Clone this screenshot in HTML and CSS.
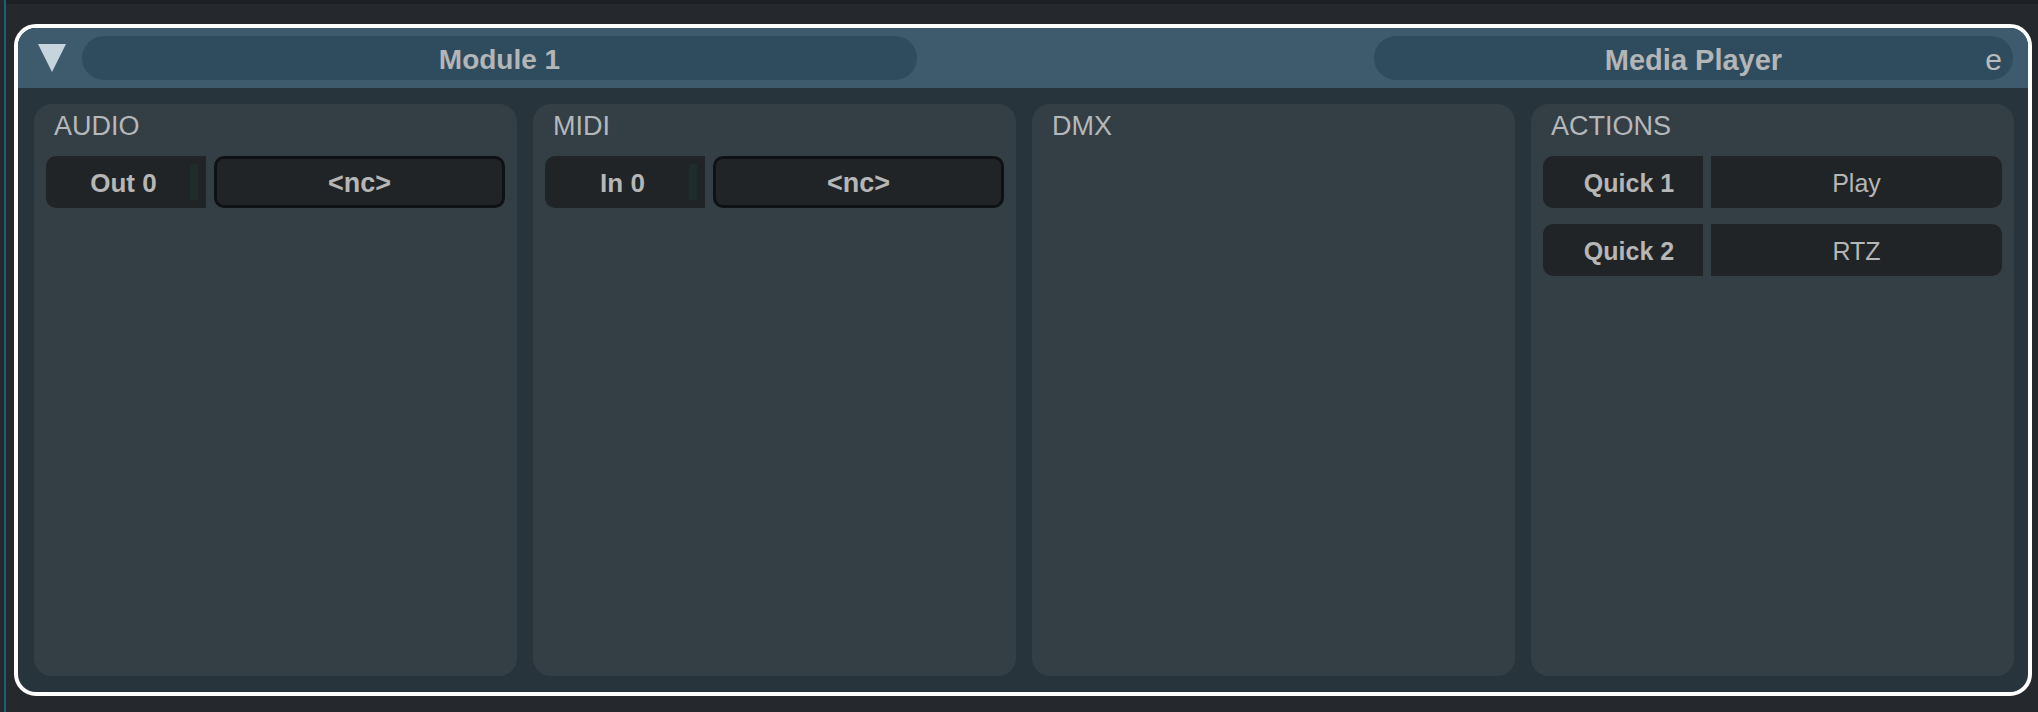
FILE: index.html
```html
<!DOCTYPE html>
<html lang="en">
<head>
    <meta charset="UTF-8">
    <title>Module 1</title>
    <link rel="stylesheet" href="styles.css">
</head>
<body>
    <div class="rail"></div>
    <div class="main">
        <div class="strip"></div>
        <div class="module">
            <div class="header">
                <svg class="collapse" width="28" height="28" viewBox="0 0 28 28">
                    <polygon points="0,0 28,0 14,28" fill="#c6d4de"/>
                </svg>
                <div class="pill name">Module 1</div>
                <div class="pill type">Media Player<span class="edit">e</span></div>
            </div>
            <div class="content">
                <div class="panel">
                    <div class="title">AUDIO</div>
                    <div class="row">
                        <div class="port">Out 0<span class="meter"></span></div>
                        <div class="route">&lt;nc&gt;</div>
                    </div>
                </div>
                <div class="panel">
                    <div class="title">MIDI</div>
                    <div class="row">
                        <div class="port">In 0<span class="meter"></span></div>
                        <div class="route">&lt;nc&gt;</div>
                    </div>
                </div>
                <div class="panel">
                    <div class="title">DMX</div>
                </div>
                <div class="panel">
                    <div class="title">ACTIONS</div>
                    <div class="row">
                        <div class="action-key">Quick 1</div>
                        <div class="action-val">Play</div>
                    </div>
                    <div class="row">
                        <div class="action-key">Quick 2</div>
                        <div class="action-val">RTZ</div>
                    </div>
                </div>
            </div>
        </div>
    </div>
</body>
</html>
```

FILE: styles.css
```css
*{
  margin: 0;
  padding: 0;
  box-sizing: border-box;
  font-family: "Liberation Sans", Arial, sans-serif;
}

body{
  display: flex;
  height: 712px;
  overflow: hidden;
  background-color: #25282c;
}

.rail{
  width: 2px;
  margin-left: 4px;
  background-color: #1b6270;
}

.main{
  flex: 1;
}

.strip{
  height: 4px;
  background-color: #1e2023;
}

.module{
  width: 2018px;
  height: 672px;
  margin: 20px 0 0 8px;
  border: 4px solid #ffffff;
  border-radius: 22px;
  overflow: hidden;
  background-color: #28343c;
  display: flex;
  flex-direction: column;
}

.header{
  height: 60px;
  display: flex;
  align-items: center;
  padding: 0 15px 0 20px;
  background-color: #3e5a6d;
}

.collapse{
  margin-right: 16px;
  flex-shrink: 0;
}

.pill{
  position: relative;
  height: 44px;
  padding-top: 4px;
  border-radius: 22px;
  background-color: #2f4c5f;
  color: #b3b5b7;
  font-size: 28px;
  font-weight: bold;
  display: flex;
  align-items: center;
  justify-content: center;
}

.name{
  width: 835px;
}

.type{
  width: 639px;
  margin-left: auto;
  font-size: 29px;
}

.edit{
  position: absolute;
  right: 11px;
  top: 7px;
  font-size: 30px;
  font-weight: normal;
  color: #b8bcbf;
}

.content{
  flex: 1;
  display: grid;
  grid-template-columns: repeat(4, 1fr);
  gap: 16px;
  padding: 16px 14px 16px 16px;
}

.panel{
  background-color: #343e45;
  border-radius: 18px;
  padding: 7px 12px 12px;
}

.title{
  height: 30px;
  line-height: 30px;
  padding-left: 8px;
  margin-bottom: 15px;
  font-size: 27px;
  color: #b4b8bb;
}

.row{
  display: flex;
  gap: 8px;
  height: 52px;
  margin-bottom: 16px;
}

.port, .route, .action-key, .action-val{
  display: flex;
  align-items: center;
  justify-content: center;
  padding-top: 3px;
  background-color: #202427;
  color: #b6b6b6;
  font-size: 25px;
}

.port{
  position: relative;
  width: 160px;
  padding-right: 5px;
  border-radius: 10px 0 0 10px;
  font-size: 26px;
  font-weight: bold;
}

.meter{
  position: absolute;
  right: 8px;
  top: 8px;
  width: 8px;
  height: 36px;
  background-color: #1e2d2b;
}

.route{
  flex: 1;
  border: 3px solid #0f1214;
  border-radius: 10px;
  font-size: 27px;
  font-weight: bold;
}

.action-key{
  width: 160px;
  padding-left: 12px;
  border-radius: 10px 0 0 10px;
  font-weight: bold;
}

.action-val{
  flex: 1;
  border-radius: 0 10px 10px 0;
}
```
